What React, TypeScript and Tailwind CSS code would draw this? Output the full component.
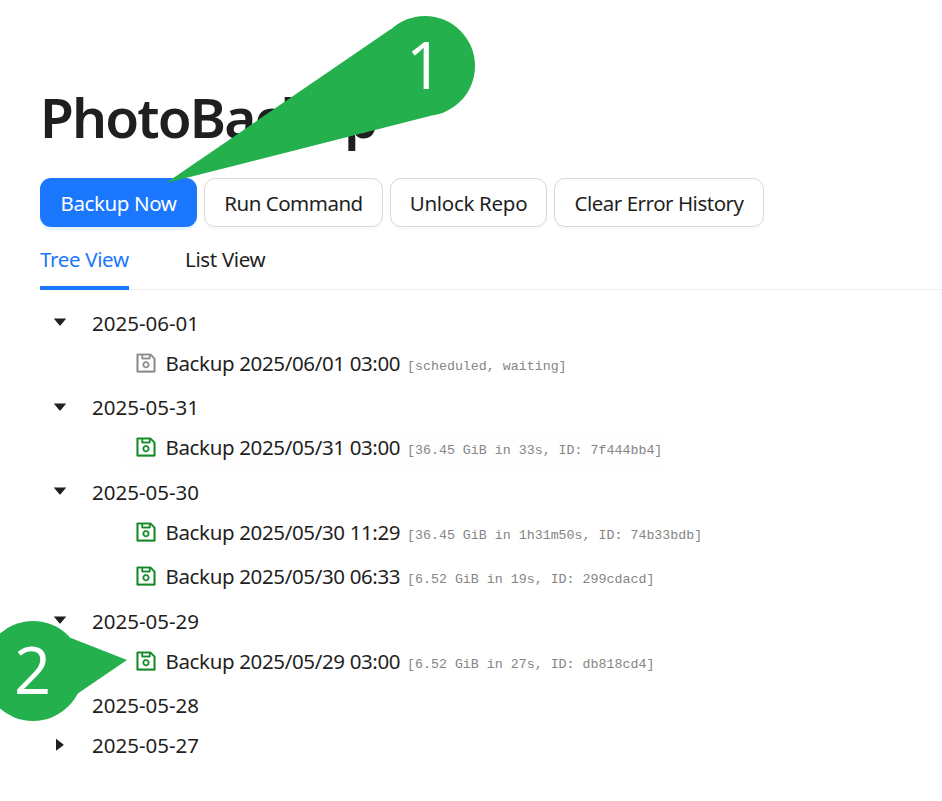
import { AiOutlineSave } from "react-icons/ai";

type Leaf = { label: string; info: string; pending?: boolean; hovered?: boolean };
type Day = { date: string; open: boolean; items: Leaf[] };

const days: Day[] = [
  {
    date: "2025-06-01",
    open: true,
    items: [{ label: "Backup 2025/06/01 03:00", info: "[scheduled, waiting]", pending: true }],
  },
  {
    date: "2025-05-31",
    open: true,
    items: [{ label: "Backup 2025/05/31 03:00", info: "[36.45 GiB in 33s, ID: 7f444bb4]", hovered: true }],
  },
  {
    date: "2025-05-30",
    open: true,
    items: [
      { label: "Backup 2025/05/30 11:29", info: "[36.45 GiB in 1h31m50s, ID: 74b33bdb]" },
      { label: "Backup 2025/05/30 06:33", info: "[6.52 GiB in 19s, ID: 299cdacd]" },
    ],
  },
  {
    date: "2025-05-29",
    open: true,
    items: [{ label: "Backup 2025/05/29 03:00", info: "[6.52 GiB in 27s, ID: db818cd4]" }],
  },
  { date: "2025-05-28", open: false, items: [] },
  { date: "2025-05-27", open: false, items: [] },
];

const buttons = [
  { label: "Run Command", width: "w-[179px]", text: "tracking-[-0.5px]" },
  { label: "Unlock Repo", width: "w-[157px]", text: "tracking-[-0.3px]" },
  { label: "Clear Error History", width: "w-[210px]", text: "tracking-[-0.48px]" },
];

function Caret({ open }: { open: boolean }) {
  return (
    <svg width="14" height="14" viewBox="0 0 14 14" className="mb-1 shrink-0 fill-[#1f1f1f]">
      {open ? <path d="M.8 3.4h12.4L7.6 10.2Q7 10.8 6.4 10.2Z" /> : <path d="M3 0.8v12L10.2 7.4Q11 6.8 10.2 6.2Z" />}
    </svg>
  );
}

export default function App() {
  return (
    <div className="relative h-[801px] w-[942px] overflow-hidden bg-white pl-10 font-['Noto_Sans',sans-serif] text-[20.5px] text-[#1f1f1f]">
      <h1 className="h-[154px] pt-[82px] text-[55px] leading-[70px] font-semibold tracking-[-1.85px] whitespace-nowrap">PhotoBackup</h1>

      <div className="mt-6 flex gap-[7px]">
        <button className="h-[49px] w-[157px] rounded-[11px] bg-[#1b77fd] pt-px tracking-[-0.4px] whitespace-nowrap text-white shadow-[0_3px_0_#e6f4ff]">
          Backup Now
        </button>
        {buttons.map((b) => (
          <button
            key={b.label}
            className={`h-[49px] rounded-[11px] border border-[#d9d9d9] bg-white pt-px whitespace-nowrap shadow-[0_3px_0_#fafafa] ${b.width}`}
          >
            <span className={b.text}>{b.label}</span>
          </button>
        ))}
      </div>

      <div className="flex h-[63px] gap-14 border-b border-[#f0f0f0] leading-8 tracking-[-0.34px]">
        <div className="-mb-px w-[89px] border-b-4 border-[#1b77fd] pt-4 whitespace-nowrap text-[#1b77fd]">Tree View</div>
        <div className="pt-4 whitespace-nowrap">List View</div>
      </div>

      <div className="pt-[14px]">
        {days.map((d) => (
          <div key={d.date}>
            <div className="flex h-[40.25px] items-center pl-[13px]">
              <Caret open={d.open} />
              <span className="mb-0.5 ml-[25px]">{d.date}</span>
            </div>
            {d.items.map((it) => (
              <div key={it.label} className="h-[44.25px] pl-[82px]">
                <div className={`flex h-10 w-fit items-center rounded-[9px] pr-1 pl-3 ${it.hovered ? "bg-[#fefefe]" : ""}`}>
                  <AiOutlineSave
                    size={24}
                    strokeWidth={14}
                    className={`mb-[3px] shrink-0 ${it.pending ? "text-[#8c8c8c]" : "text-[#158a26]"}`}
                  />
                  <span className="mb-0.5 ml-[7.5px] w-[241.5px] tracking-[-0.36px] whitespace-nowrap">{it.label}</span>
                  <span className="mt-[5px] font-['Liberation_Mono',monospace] text-[13.3px] whitespace-pre text-[#858585]">{it.info}</span>
                </div>
              </div>
            ))}
          </div>
        ))}
      </div>

      <svg className="absolute inset-0" width="942" height="801" viewBox="0 0 942 801">
        <g fill="#24b14d">
          <circle cx="425" cy="66" r="50" />
          <path d="M166 183 391 29 425 66 430 116Z" />
          <circle cx="33" cy="671" r="50" />
          <path d="M127 660 71 638 33 671 77 694Z" />
        </g>
        <g fill="#fff" fontFamily="'Open Sans', sans-serif" fontSize="65">
          <text x="406" y="89">1</text>
          <text x="14" y="694">2</text>
        </g>
      </svg>
    </div>
  );
}
